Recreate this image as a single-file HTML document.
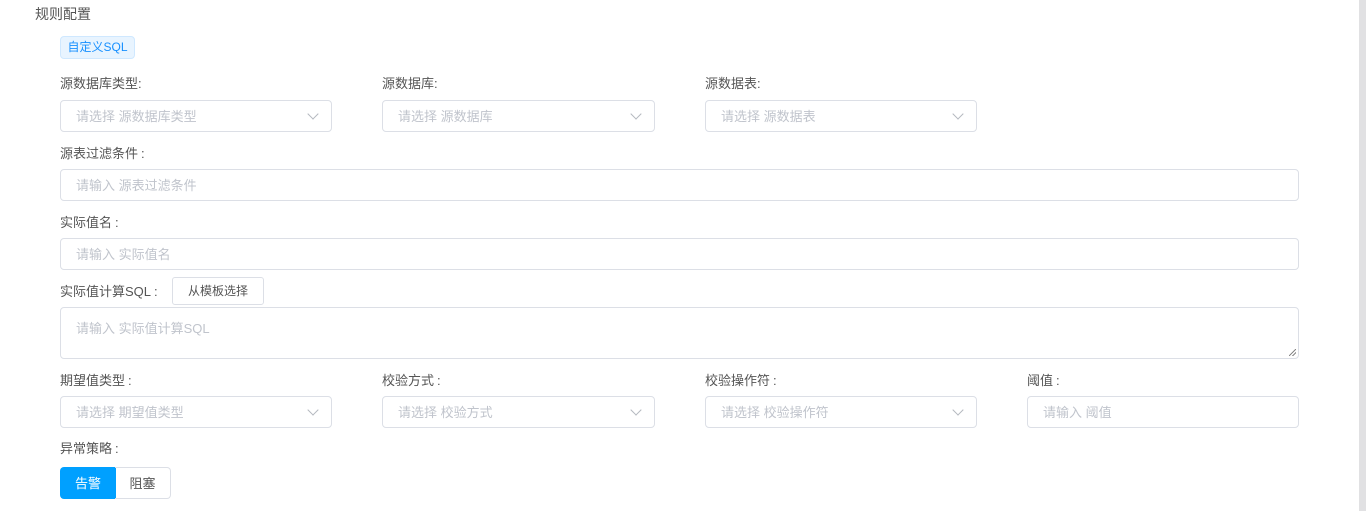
<!DOCTYPE html>
<html><head><meta charset="utf-8"><style>
*{box-sizing:border-box;margin:0;padding:0}
body{width:1366px;height:511px;background:#fff;position:relative;overflow:hidden;font-family:"Liberation Sans","Noto Sans CJK SC",sans-serif;font-size:13px;color:#555}
.a{position:absolute}
.lbl{position:absolute;color:#555;font-size:13px;line-height:16px;top:0}
.c{display:inline-block;margin-left:3px}
.box{position:absolute;border:1px solid #dcdfe6;border-radius:4px;background:#fff;color:#c0c4cc;font-size:13px;padding-left:15px;line-height:31px}
.sel::after{content:"";position:absolute;right:14px;top:9px;width:7px;height:7px;border-right:1px solid #b4b8bf;border-bottom:1px solid #b4b8bf;transform:rotate(45deg)}
.sb{position:absolute;right:0;top:0;width:7px;height:511px;background:#e1e1e3}
</style></head><body>
<div class="lbl" style="left:35px;top:6px;font-size:14px;color:#555">规则配置</div>
<div class="a" style="left:60px;top:36px;width:75px;height:23px;background:#e8f4ff;border:1px solid #cfe8ff;border-radius:4px;color:#1890ff;font-size:12px;line-height:21px;text-align:center">自定义SQL</div>

<div class="lbl" style="left:60px;top:76px">源数据库类型:</div>
<div class="lbl" style="left:382px;top:76px">源数据库:</div>
<div class="lbl" style="left:705px;top:76px">源数据表:</div>
<div class="box sel" style="left:60px;top:100px;width:272px;height:32px">请选择 源数据库类型</div>
<div class="box sel" style="left:382px;top:100px;width:273px;height:32px">请选择 源数据库</div>
<div class="box sel" style="left:705px;top:100px;width:272px;height:32px">请选择 源数据表</div>

<div class="lbl" style="left:60px;top:146px">源表过滤条件<span class="c">:</span></div>
<div class="box" style="left:60px;top:169px;width:1239px;height:32px">请输入 源表过滤条件</div>

<div class="lbl" style="left:60px;top:215px">实际值名<span class="c">:</span></div>
<div class="box" style="left:60px;top:238px;width:1239px;height:32px">请输入 实际值名</div>

<div class="lbl" style="left:60px;top:284px">实际值计算SQL<span class="c">:</span></div>
<div class="a" style="left:172px;top:277px;width:92px;height:28px;border:1px solid #dcdfe6;border-radius:3px;text-align:center;line-height:26px;font-size:12px;color:#555">从模板选择</div>
<div class="box" style="left:60px;top:307px;width:1239px;height:52px;line-height:normal;padding-top:10px">请输入 实际值计算SQL<span style="position:absolute;right:2px;bottom:2px;width:7px;height:7px;background:linear-gradient(135deg,transparent 45%,#888 46%,#888 54%,transparent 55%,transparent 70%,#888 71%,#888 79%,transparent 80%)"></span></div>

<div class="lbl" style="left:60px;top:373px">期望值类型<span class="c">:</span></div>
<div class="lbl" style="left:382px;top:373px">校验方式<span class="c">:</span></div>
<div class="lbl" style="left:705px;top:373px">校验操作符<span class="c">:</span></div>
<div class="lbl" style="left:1027px;top:373px">阈值<span class="c">:</span></div>
<div class="box sel" style="left:60px;top:396px;width:272px;height:32px">请选择 期望值类型</div>
<div class="box sel" style="left:382px;top:396px;width:273px;height:32px">请选择 校验方式</div>
<div class="box sel" style="left:705px;top:396px;width:272px;height:32px">请选择 校验操作符</div>
<div class="box" style="left:1027px;top:396px;width:272px;height:32px">请输入 阈值</div>

<div class="lbl" style="left:60px;top:441px">异常策略<span class="c">:</span></div>
<div class="a" style="left:60px;top:467px;width:56px;height:32px;background:#00a0ff;border-radius:4px 0 0 4px;color:#fff;text-align:center;line-height:33px;font-size:13px">告警</div>
<div class="a" style="left:115px;top:467px;width:56px;height:32px;border:1px solid #dcdfe6;border-left:none;border-radius:0 4px 4px 0;color:#555;text-align:center;line-height:31px;font-size:13px">阻塞</div>
<div class="sb"></div>
</body></html>
